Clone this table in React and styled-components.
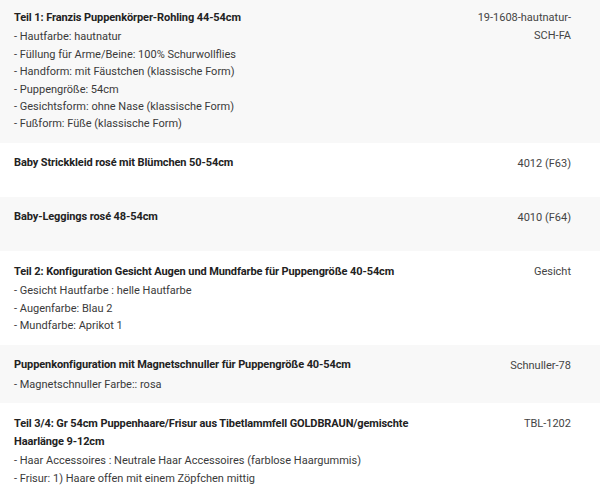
import React from "react";
import styled, { createGlobalStyle } from "styled-components";

const Global = createGlobalStyle`
  html, body { margin: 0; padding: 0; background: #fff; }
  body { font-family: Roboto, "Noto Sans", Arial, sans-serif; }
`;

const List = styled.div`
  margin-top: -2.8px;
  display: flex;
  flex-direction: column;
`;

const Row = styled.div`
  display: flex;
  justify-content: space-between;
  align-items: flex-start;
  gap: 20px;
  padding: 11.3px 29px 10px 14px;
  background: ${(p) => (p.$shade ? "#f8f8f8" : "#ffffff")};
  font-size: 11px;
  line-height: 17.45px;
  color: #3a3a3a;
`;

const Main = styled.div`
  flex: 0 0 430px;
`;

const Title = styled.div`
  font-weight: 700;
  color: #222;
  line-height: 18px;
  letter-spacing: -0.1px;
  margin-bottom: 1.7px;
`;

const Options = styled.div`
  min-height: ${(p) => (p.$empty ? "13.3px" : "0")};
`;

const Option = styled.div``;

const Sku = styled.div`
  width: 100px;
  text-align: right;
  color: #444;
  line-height: 17.5px;
  padding-top: 0.5px;
`;

const items = [
  {
    title: "Teil 1: Franzis Puppenkörper-Rohling 44-54cm",
    sku: "19-1608-hautnatur-SCH-FA",
    opts: [
      "- Hautfarbe: hautnatur",
      "- Füllung für Arme/Beine: 100% Schurwollflies",
      "- Handform: mit Fäustchen (klassische Form)",
      "- Puppengröße: 54cm",
      "- Gesichtsform: ohne Nase (klassische Form)",
      "- Fußform: Füße (klassische Form)",
    ],
  },
  { title: "Baby Strickkleid rosé mit Blümchen 50-54cm", sku: "4012 (F63)", opts: [] },
  { title: "Baby-Leggings rosé 48-54cm", sku: "4010 (F64)", opts: [] },
  {
    title: "Teil 2: Konfiguration Gesicht Augen und Mundfarbe für Puppengröße 40-54cm",
    sku: "Gesicht",
    opts: ["- Gesicht Hautfarbe : helle Hautfarbe", "- Augenfarbe: Blau 2", "- Mundfarbe: Aprikot 1"],
  },
  {
    title: "Puppenkonfiguration mit Magnetschnuller für Puppengröße 40-54cm",
    sku: "Schnuller-78",
    opts: ["- Magnetschnuller Farbe:: rosa"],
  },
  {
    title: "Teil 3/4: Gr 54cm Puppenhaare/Frisur aus Tibetlammfell GOLDBRAUN/gemischte Haarlänge 9-12cm",
    sku: "TBL-1202",
    opts: [
      "- Haar Accessoires : Neutrale Haar Accessoires (farblose Haargummis)",
      "- Frisur: 1) Haare offen mit einem Zöpfchen mittig",
    ],
  },
  { title: "", sku: "", opts: [] },
];

export default function App() {
  return (
    <>
      <Global />
      <List>
        {items.map((it, i) => (
          <Row key={i} $shade={i % 2 === 0}>
            <Main>
              <Title>{it.title}</Title>
              <Options $empty={it.opts.length === 0}>
                {it.opts.map((o, j) => (
                  <Option key={j}>{o}</Option>
                ))}
              </Options>
            </Main>
            <Sku>{it.sku}</Sku>
          </Row>
        ))}
      </List>
    </>
  );
}
